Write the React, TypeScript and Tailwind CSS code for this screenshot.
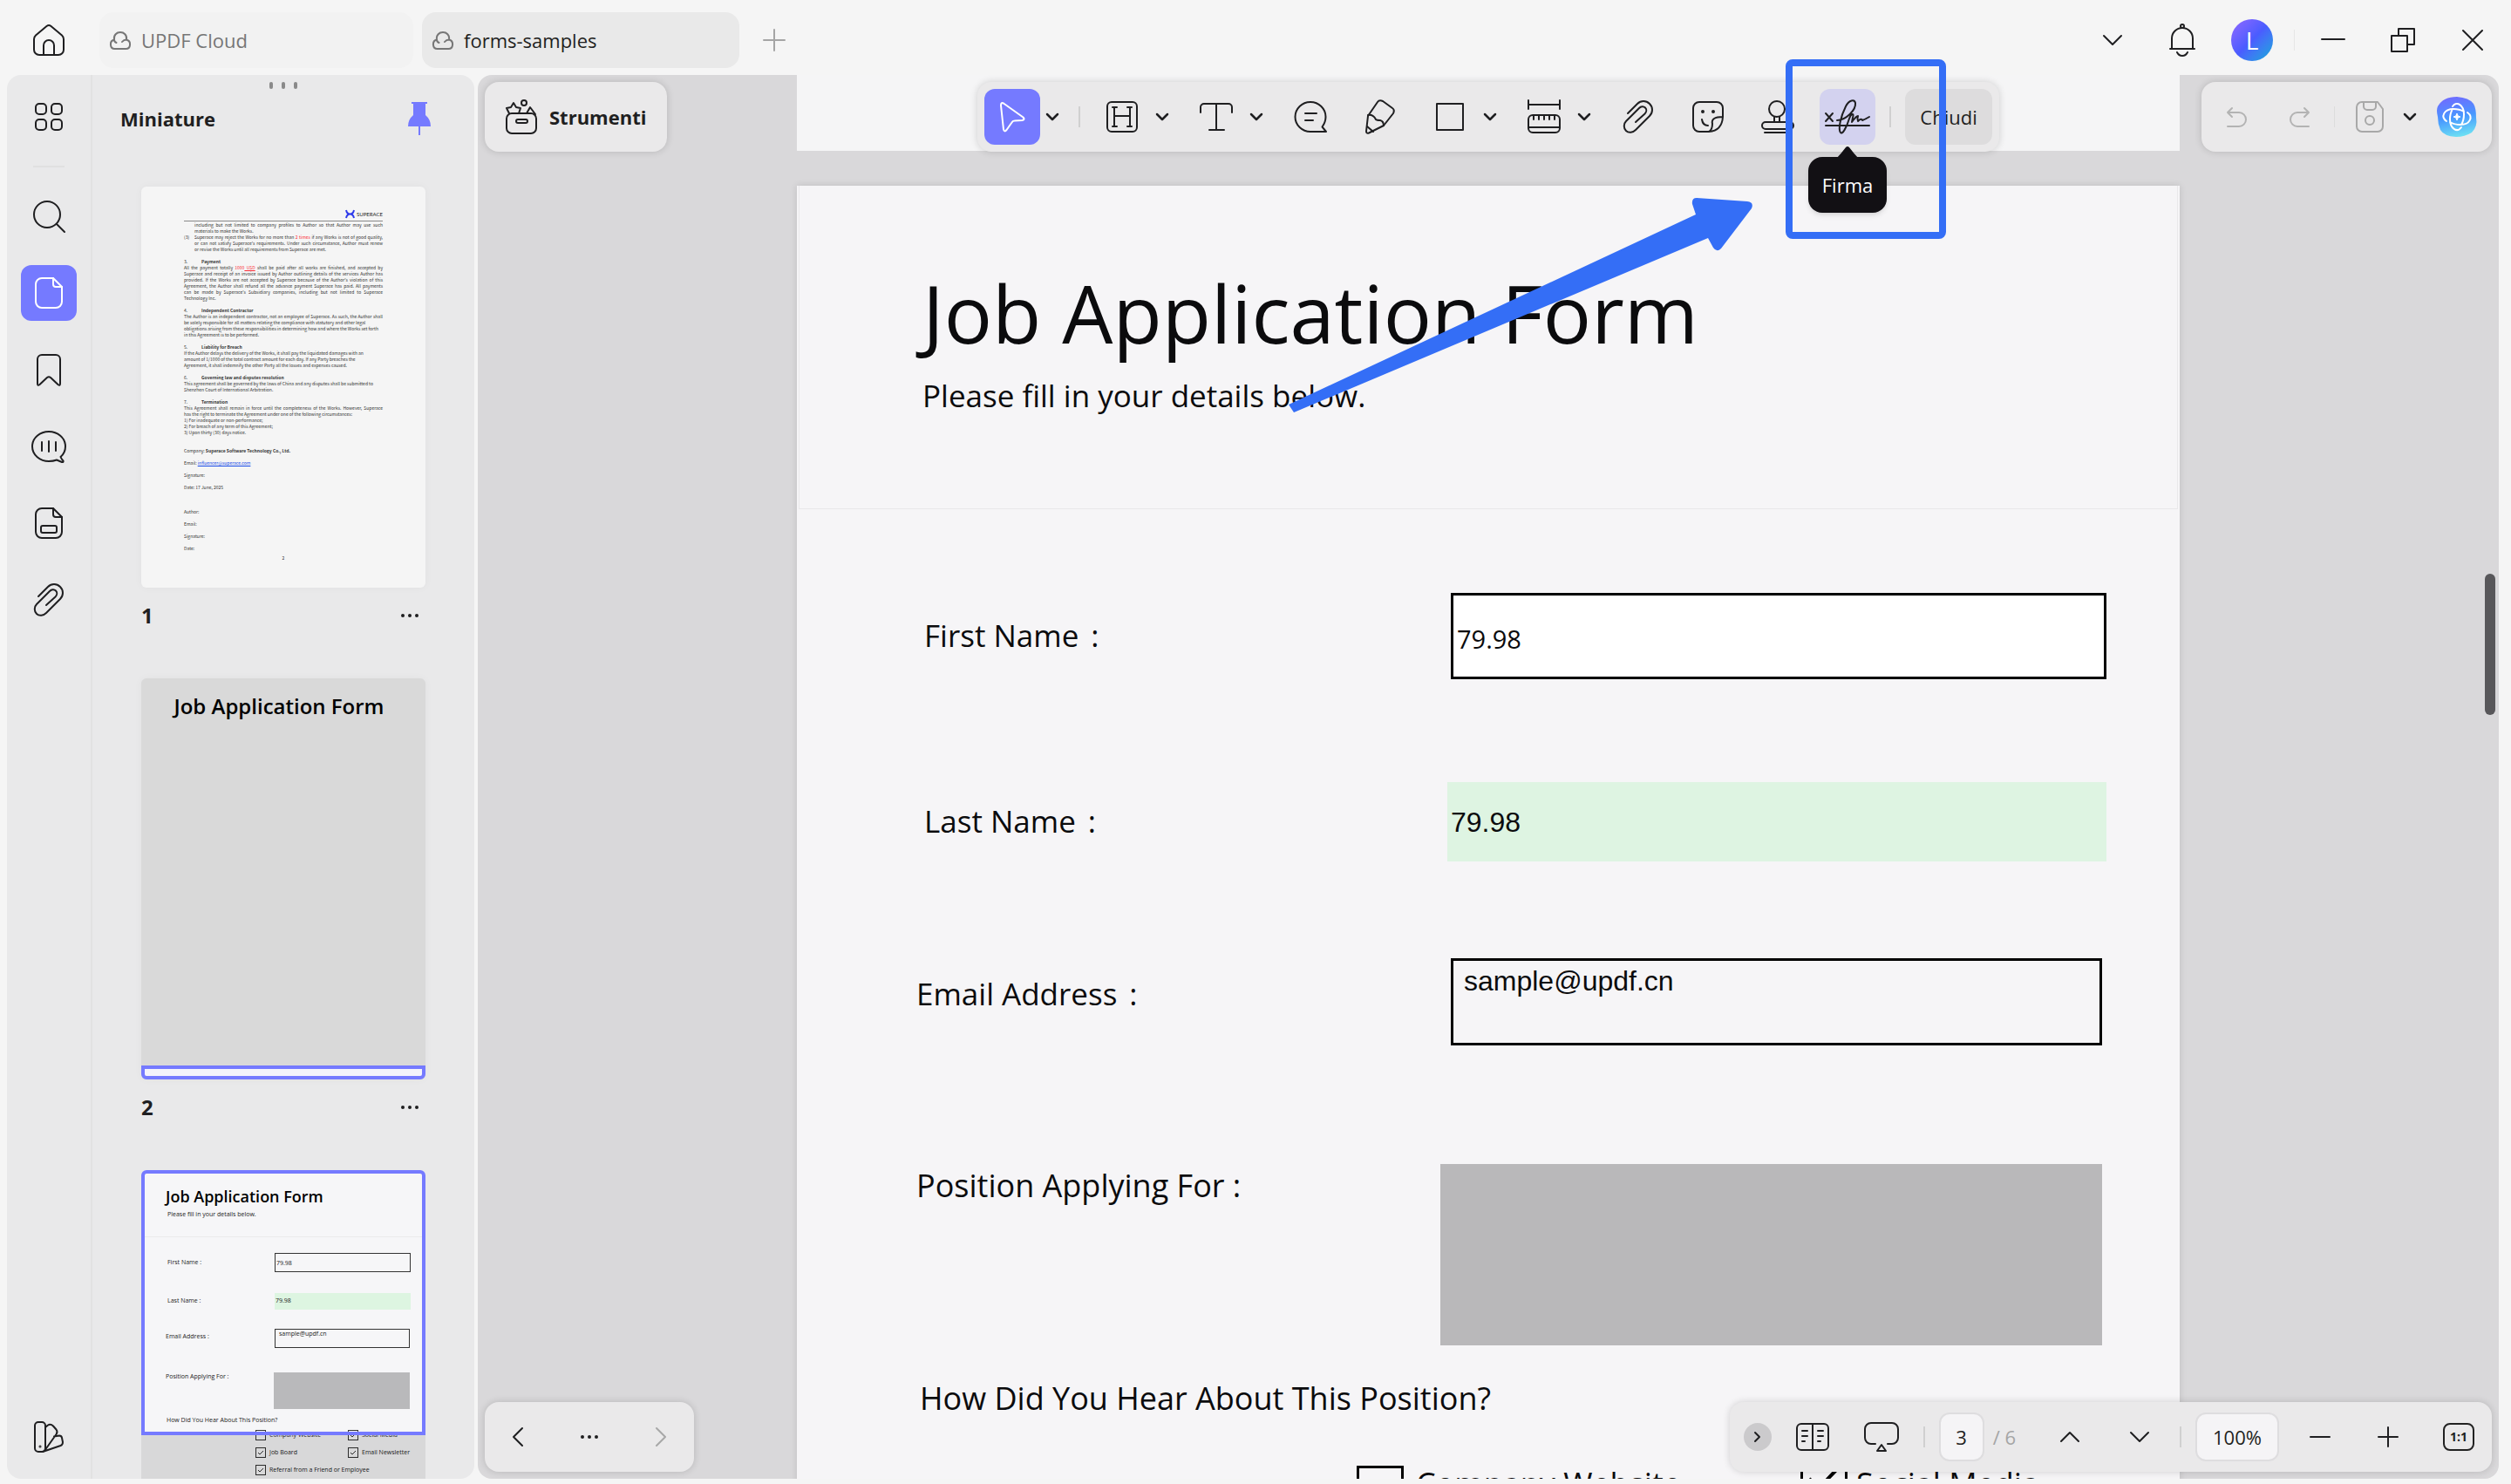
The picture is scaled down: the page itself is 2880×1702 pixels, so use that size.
import React from 'react';

interface IconProps {
    w: number;
    h: number;
    children: React.ReactNode;
    className?: string;
}

const Icon: React.FC<IconProps> = ({ w, h, children, className }) => (
    <svg
        width={w}
        height={h}
        viewBox={`0 0 ${w} ${h}`}
        fill="none"
        stroke="currentColor"
        strokeWidth={2}
        strokeLinecap="round"
        strokeLinejoin="round"
        overflow="visible"
        aria-hidden="true"
        className={`shrink-0 ${className ?? ''}`}
    >
        {children}
    </svg>
);

const HomeIcon = () => (
    <Icon w={36} h={36}>
        <path d="M15.5 2q2.5-1.8 5 0L33 12.5q2 1.7 2 4.500v12a6 6 0 0 1-6 6H7a6 6 0 0 1-6-6V17q0-2.800 2-4.500z" />
        <path d="M12 35V24a6 6 0 0 1 12 0v11" />
    </Icon>
);

const CloudIcon = () => (
    <Icon w={24} h={21}>
        <path d="M5 9.500C4 4 8 1 12 1s8 3 7 8.500C25 11 24 20 18.500 20H5.500C0 20-1 11 5 9.500M5 9.500q0 2.500 2.500 3.500M19 9.500q-3 0-5 2.500" />
    </Icon>
);

const FileIcon = ({ form = false }: { form?: boolean }) => (
    <Icon w={32} h={36}>
        <path d="M21 1H8a7 7 0 0 0-7 7v20a7 7 0 0 0 7 7h16a7 7 0 0 0 7-7V11z" />
        <path d="M21 1v7a3 3 0 0 0 3 3h7" />
        {form && <rect x="7" y="21" width="18" height="8" rx="2" />}
    </Icon>
);

const ClipIcon = () => (
    <Icon w={34} h={38}>
        <path d="M5 15L16 4c4-4 10-4 14 0s4 10 0 14L14 34c-3 3-8 4-11 1s-3-8 0-11L18 9c2-2 5-2.500 7-.500s1.500 5-.500 7L14 25" />
    </Icon>
);

const ChevronIcon = ({ big = false }: { big?: boolean }) => big
    ? <Icon w={20} h={10}><path d="M0 0l10 10L20 0" /></Icon>
    : <Icon w={12} h={6}><path d="M0 0l6 6 6-6" strokeWidth={2.5} /></Icon>;

const DotsIcon = () => (
    <Icon w={20} h={4}>
        <g fill="currentColor" stroke="none">
            <circle cx="2" cy="2" r="2" />
            <circle cx="10" cy="2" r="2" />
            <circle cx="18" cy="2" r="2" />
        </g>
    </Icon>
);

interface ToolButtonProps {
    label: string;
    children: React.ReactNode;
    className?: string;
}

const ToolButton: React.FC<ToolButtonProps> = ({ label, children, className }) => (
    <button aria-label={label} className={`flex size-16 shrink-0 items-center justify-center rounded-xl ${className ?? ''}`}>
        {children}
    </button>
);

const ToolWithMenu: React.FC<ToolButtonProps> = ({ label, children, className }) => (
    <div className="flex">
        <ToolButton label={label} className={className}>{children}</ToolButton>
        <button aria-label={`${label} menu`} className="flex w-7 items-center justify-center">
            <ChevronIcon />
        </button>
    </div>
);

const floating = 'absolute flex h-20 items-center rounded-2xl bg-[#eae9ea] shadow-[0_0_8px_rgba(0,0,0,0.16)]';

const TitleBar = () => (
    <header className="flex h-[86px] shrink-0 items-center pt-1.5 pl-[38px] pr-5">
        <button aria-label="Home"><HomeIcon /></button>
        <nav className="ml-10 flex gap-2.5">
            <button className="flex h-16 w-[360px] items-center gap-3 rounded-2xl bg-[#f2f2f2] px-3 text-[#767676]">
                <CloudIcon />
                UPDF Cloud
            </button>
            <button className="flex h-16 w-[364px] items-center gap-3 rounded-2xl bg-[#e9e9e9] px-3">
                <span className="text-[#767676]"><CloudIcon /></span>
                forms-samples
            </button>
        </nav>
        <button aria-label="Nuova scheda" className="ml-7 text-[#a5a5a5]">
            <Icon w={24} h={24}><path d="M12 0v24M0 12h24" /></Icon>
        </button>
        <div className="ml-auto flex items-center gap-8">
            <button aria-label="Elenco schede" className="flex w-12 justify-center"><ChevronIcon big /></button>
            <button aria-label="Notifiche" className="flex w-12 justify-center">
                <Icon w={30} h={38}>
                    <path d="M3 29V17a12 12 0 0 1 24 0v12M1 29h28M9 33q2 4 6 4t6-4" />
                    <circle cx="15" cy="3" r="2" />
                </Icon>
            </button>
            <button className="size-12 rounded-full bg-linear-135 from-[#9068ff] via-[#4a5cff] to-[#00a8d8] text-[28px] leading-[48px] text-white">L</button>
            <div className="-ml-2 h-6 w-px bg-[#e6e6e6]" />
            <button aria-label="Riduci" className="-ml-3 flex w-12 justify-center">
                <Icon w={28} h={28}><path d="M1 13h26" /></Icon>
            </button>
            <button aria-label="Ripristina" className="flex w-12 justify-center">
                <Icon w={28} h={28}><path d="M1 9h18v18H1zM9 9V1h18v18h-8" /></Icon>
            </button>
            <button aria-label="Chiudi finestra" className="flex w-12 justify-center">
                <Icon w={24} h={24}><path d="M1 1l22 22M23 1L1 23" /></Icon>
            </button>
        </div>
    </header>
);

const Rail = () => (
    <nav className="flex w-[98px] shrink-0 flex-col items-center gap-6 border-r-2 border-[#e2e2e2] py-4">
        <ToolButton label="Panoramica">
            <Icon w={32} h={32}>
                <rect x="1" y="1" width="12" height="12" rx="4" />
                <rect x="19" y="1" width="12" height="12" rx="4" />
                <rect x="1" y="19" width="12" height="12" rx="4" />
                <rect x="19" y="19" width="12" height="12" rx="4" />
            </Icon>
        </ToolButton>
        <div className="h-0.5 w-9 shrink-0 bg-[#e0e0e0]" />
        <ToolButton label="Cerca">
            <Icon w={36} h={36}><circle cx="16" cy="16" r="15" /><path d="M27 27l9 9" /></Icon>
        </ToolButton>
        <ToolButton label="Miniature" className="bg-[#757aff] text-white"><FileIcon /></ToolButton>
        <ToolButton label="Segnalibri">
            <Icon w={28} h={37}>
                <path d="M1 6a5 5 0 0 1 5-5h16a5 5 0 0 1 5 5v28q0 3-2.500 1L16 27q-2-1.500-4 0l-8.500 8Q1 37 1 34z" />
            </Icon>
        </ToolButton>
        <ToolButton label="Commenti">
            <Icon w={40} h={37}>
                <path d="M33.500 30C37 27 39 23 39 18 39 8 30 1 20 1S1 8 1 18s9 17 19 17q5 0 9-1.500l6 2.500q2 .500 1.500-1.500-2-2-3-4.500zM12 13v10M20 12v12M28 13v10" />
            </Icon>
        </ToolButton>
        <ToolButton label="Campi"><FileIcon form /></ToolButton>
        <ToolButton label="Allegati"><ClipIcon /></ToolButton>
        <ToolButton label="Tema" className="mt-auto">
            <Icon w={34} h={36}>
                <rect x="1" y="1" width="12" height="34" rx="4" />
                <path d="M13 7l3-2.500q3-2 6 1l3.500 4q2 2.500 0 5.500L12 34M23 17.500l6-1q2.500 0 3 2.500l1 5q0 3-2.500 4L10 35" />
                <circle cx="7" cy="29" r="0.5" />
            </Icon>
        </ToolButton>
    </nav>
);

const clauses: { no: string; title: string; lines: string[]; rest: string[] }[] = [
    {
        no: '4.',
        title: 'Independent Contractor',
        lines: ['The Author is an independent contractor, not an employee of Superace. As such, the Author shall'],
        rest: [
            'be solely responsible for all matters relating the compliance with statutory and other legal',
            'obligations arising from these responsibilities in determining how and where the Works set forth',
            'in this Agreement is to be performed.',
        ],
    },
    {
        no: '5.',
        title: 'Liability for Breach',
        lines: [],
        rest: [
            'If the Author delays the delivery of the Works, it shall pay the liquidated damages with an',
            'amount of 1/1000 of the total contract amount for each day. If any Party breaches the',
            'Agreement, it shall indemnify the other Party all the losses and expenses caused.',
        ],
    },
    {
        no: '6.',
        title: 'Governing law and disputes resolution',
        lines: [],
        rest: [
            'This agreement shall be governed by the laws of China and any disputes shall be submitted to',
            'Shenzhen Court of International Arbitration.',
        ],
    },
    {
        no: '7.',
        title: 'Termination',
        lines: ['This Agreement shall remain in force until the completeness of the Works. However, Superace'],
        rest: [
            'has the right to terminate the Agreement under one of the following circumstances:',
            '1) For inadequate or non-performance;',
            '2) For breach of any term of this Agreement;',
            '3)  Upon thirty (30) days notice.',
        ],
    },
];

const Full: React.FC<{ children: React.ReactNode }> = ({ children }) => (
    <p className="[text-align-last:justify]">{children}</p>
);

const ContractThumb = () => (
    <div className="h-[460px] rounded-md bg-[#f5f5f5] px-[49px] pt-6 text-[5px] leading-[7px] whitespace-nowrap text-[#333] shadow-[0_0_10px_rgba(0,0,0,0.04)] [font-family:'Noto_Sans_CJK_SC',sans-serif]">
        <div className="flex h-4 items-center justify-end gap-0.5 border-b border-[#888] font-[Lato] text-[6px] text-[#222]">
            <svg width="11" height="11" viewBox="0 0 11 11" fill="none" stroke="#2f3bea" strokeWidth="2">
                <path d="M1 1q1 4.500 4.500 4.500T10 1M1 10q1-4.500 4.500-4.500T10 10" />
            </svg>
            SUPERACE
        </div>
        <div className="pl-3">
            <Full>including but not limited to company profiles to Author so that Author may use such</Full>
            <p>materials to make the Works.</p>
        </div>
        <div className="flex">
            <p className="w-3 shrink-0">(3)</p>
            <div className="grow">
                <Full>Superace may reject the Works for no more than <span className="text-red-500">2 times</span> if any Works is not of good quality,</Full>
                <Full>or can not satisfy Superace's requirements. Under such circumstance, Author must renew</Full>
                <p>or revise the Works until all requirements from Superace are met.</p>
            </div>
        </div>
        <div className="mt-[7px] flex"><span className="w-5">3.</span><b>Payment</b></div>
        <Full>All the payment totally <span className="text-red-500">1000<u> USD</u></span> shall be paid after all works are finished, and accepted by</Full>
        <Full>Superace and receipt of an invoice issued by Author outlining details of the services Author has</Full>
        <Full>provided. If the Works are not accepted by Superace because of the Author's violation of this</Full>
        <Full>Agreement, the Author shall refund all the advance payment Superace has paid. All payments</Full>
        <Full>can be made by Superace's Subsidiary companies, including but not limited to Superace</Full>
        <p>Technology Inc.</p>
        {clauses.map(clause => (
            <div key={clause.no} className="mt-[7px]">
                <div className="flex"><span className="w-5">{clause.no}</span><b>{clause.title}</b></div>
                {clause.lines.map(line => <Full key={line}>{line}</Full>)}
                {clause.rest.map(line => <p key={line}>{line}</p>)}
            </div>
        ))}
        <div className="mt-[14px] flex flex-col gap-[7px]">
            <p>Company: <b>Superace Software Technology Co., Ltd.</b></p>
            <p>Email: <span className="text-blue-700 underline">influencer@superace.com</span></p>
            <p>Signature:</p>
            <p>Date: 17 June, 2025</p>
        </div>
        <div className="mt-[21px] flex flex-col gap-[7px]">
            <p>Author:</p>
            <p>Email:</p>
            <p>Signature:</p>
            <p>Date:</p>
        </div>
        <p className="mt-1 text-center">2</p>
    </div>
);

const CoverThumb = () => (
    <div className="relative h-[460px] rounded-md bg-[#d9d9d9] pt-3.5 pr-2.5 text-center text-[24px] leading-9 font-semibold text-black shadow-[0_0_10px_rgba(0,0,0,0.04)]">
        Job Application Form
        <div className="absolute inset-x-0 bottom-0 h-4 rounded-b-md border-4 border-[#757aff] bg-[#f4f3fb]" />
    </div>
);

const MiniOption = ({ text, checked = true }: { text: string; checked?: boolean }) => (
    <div className="flex items-center gap-1">
        <svg width="12" height="12" viewBox="0 0 12 12" fill="none" stroke="#333">
            <rect x="0.5" y="0.5" width="11" height="11" />
            {checked && <path d="M3 6l2 2 4-4" />}
        </svg>
        {text}
    </div>
);

const FormThumb = () => (
    <div className="relative h-[460px] rounded-md bg-[#f6f6f8] text-[7px] leading-[10px] whitespace-nowrap text-[#222]">
        <div className="h-[77px] border-b border-[#ebebeb] pl-7 pt-[18px]">
            <p className="text-[18px] leading-6 font-semibold text-black">Job Application Form</p>
            <p className="pl-0.5 pt-1">Please fill in your details below.</p>
        </div>
        <div className="flex justify-between pl-[30px] pr-[17px] pt-[18px]">
            <span className="pt-1.5">First Name :</span>
            <span className="h-[22px] w-[156px] border border-[#333] pt-1.5 pl-px">79.98</span>
        </div>
        <div className="flex justify-between pl-[30px] pr-[17px] pt-6">
            <span className="pt-1">Last Name :</span>
            <span className="h-[19px] w-[156px] bg-[#ddf5e1] pt-1 pl-px">79.98</span>
        </div>
        <div className="flex justify-between pl-7 pr-[18px] pt-[22px]">
            <span className="pt-1">Email Address :</span>
            <span className="h-[22px] w-[155px] border border-[#333] pl-1">sample@updf.cn</span>
        </div>
        <div className="flex justify-between pl-7 pr-[18px] pt-7">
            <span>Position Applying For :</span>
            <span className="h-[42px] w-[156px] bg-[#b9b9bb]" />
        </div>
        <p className="pl-[29px] pt-2">How Did You Hear About This Position?</p>
        <div className="grid grid-cols-[106px_auto] gap-y-2 pl-[131px] pt-1.5">
            <MiniOption text="Company Website" checked={false} />
            <MiniOption text="Social Media" />
            <MiniOption text="Job Board" />
            <MiniOption text="Email Newsletter" />
            <div className="col-span-2"><MiniOption text="Referral from a Friend or Employee" /></div>
        </div>
        <div className="absolute inset-x-0 bottom-0 top-[304px] bg-black/12" />
        <div className="absolute inset-x-0 top-0 h-[304px] rounded-t-md border-4 border-[#757aff]" />
    </div>
);

const Thumbnails = () => (
    <aside className="flex grow flex-col overflow-hidden">
        <div className="mt-2 flex h-2 shrink-0 justify-center gap-2.5 text-[#8a8a8a]">
            <i className="w-1 rounded-full bg-current" />
            <i className="w-1 rounded-full bg-current" />
            <i className="w-1 rounded-full bg-current" />
        </div>
        <div className="mt-2 mb-[52px] flex h-[52px] shrink-0 items-center justify-between pl-8 pr-[50px]">
            <h2 className="font-bold">Miniature</h2>
            <button aria-label="Blocca pannello">
                <svg width="26" height="38" viewBox="0 0 26 38" fill="#757aff">
                    <path d="M4 0h18v2h-2v13q6 5 6 13H0q0-8 6-13V2H4zM12 28h2v10h-2z" />
                </svg>
            </button>
        </div>
        {[<ContractThumb />, <CoverThumb />, <FormThumb />].map((thumb, i) => (
            <figure key={i} className="mb-14 shrink-0 px-14">
                {thumb}
                <figcaption className="mt-4 flex h-8 items-center justify-between pr-2 text-2xl font-bold">
                    {i + 1}
                    <button aria-label={`Altro, pagina ${i + 1}`}><DotsIcon /></button>
                </figcaption>
            </figure>
        ))}
    </aside>
);

const Separator = () => <div className="h-6 w-0.5 bg-[#d0d0d0]" />;

const Toolbar = () => (
    <div className={`${floating} top-2 left-1/2 -translate-x-1/2 gap-4 px-2`}>
        <ToolWithMenu label="Seleziona" className="bg-[#757aff] text-white">
            <Icon w={28} h={34}>
                <path d="M4 1.500l22.500 16q2.500 2.500-1 3.500l-9 .500q-2 0-3 2L7.500 32Q5 35 4 31.500L1 4Q1 0 4 1.500z" />
            </Icon>
        </ToolWithMenu>
        <Separator />
        <ToolWithMenu label="Evidenzia">
            <Icon w={36} h={36}>
                <rect x="1" y="1" width="34" height="34" rx="5" />
                <path d="M9 7v22M27 7v22M9 17h18M7 7h5M24 7h5M7 29h5M24 29h5" />
            </Icon>
        </ToolWithMenu>
        <ToolWithMenu label="Testo">
            <Icon w={38} h={32}><path d="M1 11V5a4 4 0 0 1 4-4h28a4 4 0 0 1 4 4v6M19 1v30M11 31h17" /></Icon>
        </ToolWithMenu>
        <ToolButton label="Nota">
            <Icon w={38} h={36}>
                <path d="M19 35A17.500 17 0 1 1 36.500 18q0 6-4 11.500L37 35zM13 14h13M13 22h9" />
            </Icon>
        </ToolButton>
        <ToolButton label="Matita">
            <Icon w={34} h={40}>
                <path d="M14 3q2-3 6-1l11 8q3 2 1 6L21 30 4 38.500q-3 1-3-2L3 19z" />
                <path d="M3 18q6-1 9 5 1 1 5 1 4 1 4 6M2 31l7 6" />
            </Icon>
        </ToolButton>
        <ToolWithMenu label="Forma">
            <Icon w={32} h={32}><path d="M1 1h30v30H1z" /></Icon>
        </ToolWithMenu>
        <ToolWithMenu label="Misura">
            <Icon w={38} h={38}>
                <path d="M1 0v10M37 0v10M1 5h36M1 31h36M7 17v5M13 17v5M19 17v5M25 17v5M31 17v5" />
                <rect x="1" y="17" width="36" height="20" rx="5" />
            </Icon>
        </ToolWithMenu>
        <ToolButton label="Allegato"><ClipIcon /></ToolButton>
        <ToolButton label="Adesivo">
            <Icon w={36} h={36}>
                <path d="M35 18V8a7 7 0 0 0-7-7H8a7 7 0 0 0-7 7v20a7 7 0 0 0 7 7h11q15-1 16-17-14 0-12 8 0 7-4 9M11 21q1 7 7 7" />
                <circle cx="12" cy="12" r="1" fill="currentColor" />
                <circle cx="24" cy="12" r="1" fill="currentColor" />
            </Icon>
        </ToolButton>
        <ToolButton label="Timbro">
            <Icon w={38} h={38}>
                <circle cx="18" cy="10" r="9" />
                <path d="M15 19v6M21 19v6M4 37h30" />
                <rect x="1" y="25" width="36" height="8" rx="4" />
            </Icon>
        </ToolButton>
        <div className="relative">
            <ToolButton label="Firma" className="bg-[#d3d2ef]">
                <Icon w={52} h={40}>
                    <path d="M1 16l8 9M9 16l-8 9M1 30h50" />
                    <path d="M14 24C24 24 36 12 35 4c-1-4-7-4-11 4-6 12-9 26-6 30 2 3 7-6 10-16 2-6 6-7 4-1l-1 5q5-7 7-7-1 3 0 6 4-4 5-1 3-1 8-4" />
                </Icon>
            </ToolButton>
            <div role="tooltip" className="absolute top-[78px] left-1/2 flex h-16 w-[90px] -translate-x-1/2 items-center justify-center rounded-2xl bg-[#121014] text-white shadow-md">
                <svg width="26" height="14" viewBox="0 0 26 14" fill="#121014" className="absolute -top-3">
                    <path d="M0 14Q5 9 11 1q2-2 4 0 6 8 11 13z" />
                </svg>
                Firma
            </div>
        </div>
        <Separator />
        <button className="h-16 w-[100px] rounded-xl bg-[#dddcdd]">Chiudi</button>
        {/* callout around the signature tool */}
        <div className="pointer-events-none absolute -top-[26px] right-[61px] h-[206px] w-[184px] rounded-lg border-8 border-[#346ef6]" />
        <svg className="pointer-events-none absolute top-[132px] right-[283px]" width="532" height="248" viewBox="0 0 532 248" fill="#346ef6">
            <path d="M0 238L467 20l-4-12Q462 1 468 1l58 4q8 1 5 8l-35 46q-5 5-9-1l-6-11L6 247z" />
        </svg>
    </div>
);

const HistoryBar = () => (
    <div className={`${floating} top-2 right-2 gap-2 pl-2 pr-4`}>
        <ToolButton label="Annulla" className="text-[#b3b3b3]">
            <Icon w={23} h={23}><path d="M6 1L1 6l5 5M1 6h13a8 8 0 0 1 0 16H1" /></Icon>
        </ToolButton>
        <ToolButton label="Ripeti" className="text-[#b3b3b3]">
            <Icon w={23} h={23}><path d="M17 1l5 5-5 5M22 6H9a8 8 0 0 0 0 16h13" /></Icon>
        </ToolButton>
        <div className="h-6 w-px bg-[#dcdcdc]" />
        <div className="flex">
            <ToolButton label="Salva" className="text-[#a8a8a8]">
                <Icon w={32} h={36}>
                    <path d="M7 1h18l6 8v20a6 6 0 0 1-6 6H7a6 6 0 0 1-6-6V7a6 6 0 0 1 6-6z" />
                    <path d="M9 1v5a4 4 0 0 0 4 4h6a4 4 0 0 0 4-4V1" />
                    <circle cx="16" cy="22" r="5" />
                </Icon>
            </ToolButton>
            <button aria-label="Opzioni di salvataggio" className="flex w-7 items-center justify-center"><ChevronIcon /></button>
        </div>
        <button aria-label="UPDF AI" className="ml-2">
            <svg width="48" height="48" viewBox="0 0 48 48" fill="none">
                <defs>
                    <linearGradient id="ai" x1="0.4" y1="0" x2="0.6" y2="1">
                        <stop offset="0" stopColor="#6f6cff" />
                        <stop offset="0.5" stopColor="#4897ff" />
                        <stop offset="1" stopColor="#6de2f3" />
                    </linearGradient>
                </defs>
                <path d="M2 12Q8 1 24 1q14 1 19 8 3 5 3 16 2 10-5 17-8 5-18 5-14-1-18-8Q2 32 2 24 0 16 2 12z" fill="url(#ai)" />
                <g stroke="#fff" strokeWidth="2" strokeLinecap="round">
                    <path d="M12 29C5 24 9 15 20 15q7 0 12 3M19 12C24 5 32 11 32 21q0 7-3 12M36 19C43 24 39 33 28 33q-7 0-12-3M29 36C24 43 16 37 16 27q0-7 3-12" />
                </g>
                <path d="M24 20q.5 4 4 4-3.500 0-4 4-.5-4-4-4 3.500 0 4-4z" fill="#fff" stroke="#fff" />
            </svg>
        </button>
    </div>
);

const JumpBar = () => (
    <div className={`${floating} bottom-2 left-2 w-[240px] justify-between px-8`}>
        <button aria-label="Indietro"><Icon w={12} h={20}><path d="M11 0L1 10l10 10" /></Icon></button>
        <button aria-label="Altro"><DotsIcon /></button>
        <button aria-label="Avanti" className="text-[#a8a8a8]"><Icon w={12} h={20}><path d="M1 0l10 10L1 20" /></Icon></button>
    </div>
);

const pillInput = 'h-[56px] rounded-xl border-2 border-[#dedddf] bg-[#f5f4f6] text-center';

const ViewBar = () => (
    <div className={`${floating} right-2 bottom-2 gap-4 pl-4 pr-5`}>
        <button aria-label="Comprimi barra" className="flex size-8 items-center justify-center rounded-full bg-[#cbcacc]">
            <Icon w={5} h={10}><path d="M0 0l5 5-5 5" /></Icon>
        </button>
        <button aria-label="Layout pagina" className="ml-3">
            <Icon w={38} h={32}>
                <rect x="1" y="1" width="36" height="30" rx="5" />
                <path d="M19 1v30M7 9h6M7 15h6M7 21h3M25 9h6M25 15h6M25 21h3" />
            </Icon>
        </button>
        <button aria-label="Presentazione" className="ml-6">
            <Icon w={40} h={34}>
                <path d="M13 25H8a7 7 0 0 1-7-7V8a7 7 0 0 1 7-7h24a7 7 0 0 1 7 7v10a7 7 0 0 1-7 7h-5M20 26l5 7H15z" />
            </Icon>
        </button>
        <div className="ml-3 h-6 w-0.5 bg-[#d0d0d0]" />
        <div className="flex items-center gap-2.5 text-[#a5a5a5]">
            <input aria-label="Pagina" defaultValue="3" className={`${pillInput} w-[52px] text-[#222]`} />
            / 6
        </div>
        <button aria-label="Pagina precedente" className="ml-9"><Icon w={20} h={12}><path d="M0 11L10 1l10 10" /></Icon></button>
        <button aria-label="Pagina successiva" className="ml-11"><Icon w={20} h={12}><path d="M0 1l10 10L20 1" /></Icon></button>
        <div className="ml-5 h-6 w-0.5 bg-[#d0d0d0]" />
        <input aria-label="Zoom" defaultValue="100%" className={`${pillInput} w-[96px]`} />
        <button aria-label="Riduci zoom" className="ml-5"><Icon w={22} h={22}><path d="M0 11h22" /></Icon></button>
        <button aria-label="Aumenta zoom" className="ml-10"><Icon w={22} h={22}><path d="M0 11h22M11 0v22" /></Icon></button>
        <button className="ml-9 h-8 w-9 rounded-lg border-2 border-[#222] text-sm leading-none font-bold">1:1</button>
    </div>
);

const rowClass = 'flex items-start justify-between leading-[50px]';

const FormPage = () => (
    <form className="h-[2240px] w-[1586px] shrink-0 bg-[#f6f5f7] text-[35px] text-[#0b0b0d] shadow-[0_0_8px_rgba(0,0,0,0.12)]">
        <div className="mx-0.5 h-[371px] border border-t-0 border-[#e9e8ea] pt-24 pl-[141px]">
            <h1 className="text-[92px] leading-[100px]">Job Application Form</h1>
            <p className="mt-5 leading-[50px]">Please fill in your details below.</p>
        </div>
        <div className={`${rowClass} mt-24 pl-[146px] pr-[84px]`}>
            <label htmlFor="first" className="mt-6 flex gap-3.5"><span>First Name</span>:</label>
            <input id="first" defaultValue="79.98" className="h-[99px] w-[752px] border-[3px] border-black bg-white pl-1 pt-1.5 text-[29px]" />
        </div>
        <div className={`${rowClass} mt-[118px] pl-[146px] pr-[84px]`}>
            <label htmlFor="last" className="mt-5 flex gap-3.5"><span>Last Name</span>:</label>
            <input id="last" defaultValue="79.98" className="h-[91px] w-[756px] bg-[#def4e2] pl-1 pt-0.5 font-['Liberation_Sans'] text-[32px]" />
        </div>
        <div className={`${rowClass} mt-[111px] pl-[137px] pr-[89px]`}>
            <label htmlFor="email" className="mt-4 flex gap-3.5"><span>Email Address</span>:</label>
            <input id="email" defaultValue="sample@updf.cn" className="h-[100px] w-[747px] border-[3px] border-black pb-12 pl-3 font-['Liberation_Sans'] text-[32px]" />
        </div>
        <div className={`${rowClass} mt-[136px] pl-[137px] pr-[89px] text-[36px]`}>
            <label htmlFor="position">Position Applying For :</label>
            <textarea id="position" className="h-[208px] w-[759px] resize-none bg-[#b9b8ba]" />
        </div>
        <p className="mt-9 pl-[141px] text-[36px] leading-[50px]">How Did You Hear About This Position?</p>
        <div className="mt-12 flex pl-[642px] text-[36px] leading-[50px]">
            <label className="flex w-[509px] items-center gap-3.5">
                <input type="checkbox" className="size-[54px] appearance-none border-[3px] border-black" />
                <span className="pb-3">Company Website</span>
            </label>
            <label className="relative flex items-center gap-2.5">
                <input type="checkbox" defaultChecked className="size-[54px] appearance-none border-[3px] border-black" />
                <svg width="54" height="54" viewBox="0 0 54 54" fill="none" stroke="#000" strokeWidth="4" className="absolute left-0">
                    <path d="M10 15l12 10 19-20" />
                </svg>
                <span className="pb-3">Social Media</span>
            </label>
        </div>
    </form>
);

const Viewer = () => (
    <main className="relative ml-1 grow">
        <div className="absolute inset-0 flex flex-col items-center gap-10 overflow-hidden rounded-2xl bg-[#d9d8da]">
            <div className="h-[87px] w-[1586px] shrink-0 bg-[#f5f5f6]" />
            <FormPage />
        </div>
        <button className={`${floating} top-2 left-2 gap-3.5 px-6 font-bold`}>
            <Icon w={36} h={39}>
                <rect x="1" y="15" width="34" height="23" rx="6" />
                <rect x="12" y="22" width="13" height="4" rx="2" />
                <circle cx="21" cy="3" r="3" />
                <path d="M4 15L1 9l5-1 3-5 3 5 5 1-2 6M24 15l4-7 6 8" />
            </Icon>
            Strumenti
        </button>
        <HistoryBar />
        <JumpBar />
        <ViewBar />
        <Toolbar />
        <div className="absolute top-[572px] right-1 h-[162px] w-3 rounded-full bg-[#58575a]" />
    </main>
);

const App: React.FC = () => (
    <div className="flex h-screen flex-col overflow-hidden bg-[#f5f5f5] font-['Open_Sans','Noto_Sans_CJK_SC',sans-serif] text-[22px] text-[#1f1f21]">
        <TitleBar />
        <div className="flex min-h-0 grow pb-1.5 pl-2 pr-[14px]">
            <div className="flex w-[536px] shrink-0 overflow-hidden rounded-2xl bg-[#e9e9ea]">
                <Rail />
                <Thumbnails />
            </div>
            <Viewer />
        </div>
    </div>
);

export default App;
